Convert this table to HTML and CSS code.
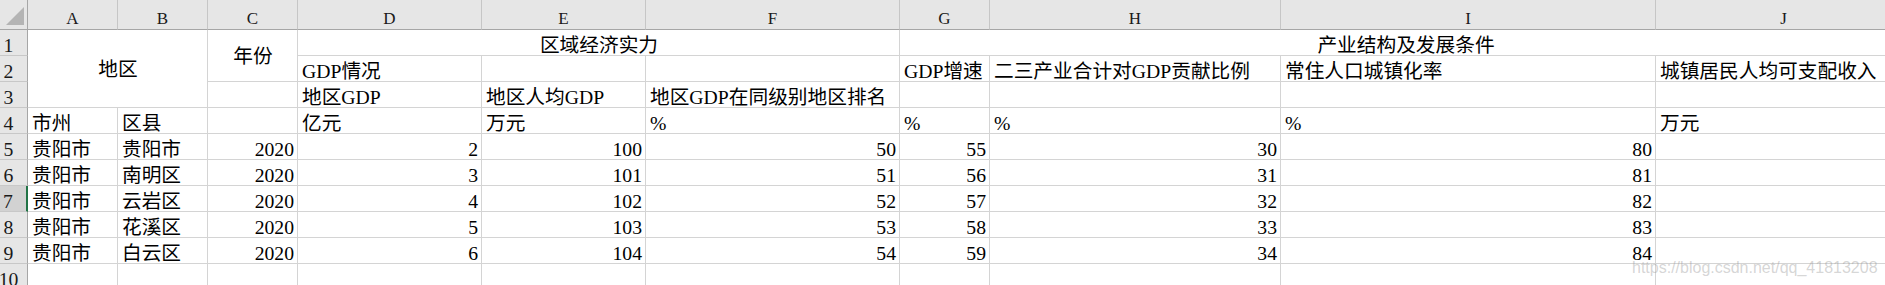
FILE: index.html
```html
<!DOCTYPE html>
<html lang="zh-CN">
<head>
<meta charset="utf-8">
<title>Sheet</title>
<link rel="stylesheet" href="styles.css">
</head>
<body>
<div class="sheet">
  <div class="hd corner"><div class="tri"></div></div>
  <div class="hd col">A</div><div class="hd col">B</div><div class="hd col">C</div><div class="hd col">D</div><div class="hd col">E</div><div class="hd col">F</div><div class="hd col">G</div><div class="hd col">H</div><div class="hd col">I</div><div class="hd col">J</div>

  <div class="rh">1</div>
  <div class="c ctr m-area">地区</div>
  <div class="c ctr m-year">年份</div>
  <div class="c ctrh m-eco">区域经济实力</div>
  <div class="c ctrh m-ind">产业结构及发展条件</div>

  <div class="rh">2</div>
  <div class="c">GDP情况</div><div class="c"></div><div class="c"></div><div class="c">GDP增速</div><div class="c">二三产业合计对GDP贡献比例</div><div class="c">常住人口城镇化率</div><div class="c">城镇居民人均可支配收入</div>

  <div class="rh">3</div>
  <div class="c"></div><div class="c">地区GDP</div><div class="c">地区人均GDP</div><div class="c">地区GDP在同级别地区排名</div><div class="c"></div><div class="c"></div><div class="c"></div><div class="c"></div>

  <div class="rh">4</div>
  <div class="c">市州</div><div class="c">区县</div><div class="c"></div><div class="c">亿元</div><div class="c">万元</div><div class="c">%</div><div class="c">%</div><div class="c">%</div><div class="c">%</div><div class="c">万元</div>

  <div class="rh">5</div>
  <div class="c">贵阳市</div><div class="c">贵阳市</div><div class="c r">2020</div><div class="c r">2</div><div class="c r">100</div><div class="c r">50</div><div class="c r">55</div><div class="c r">30</div><div class="c r">80</div><div class="c"></div>

  <div class="rh">6</div>
  <div class="c">贵阳市</div><div class="c">南明区</div><div class="c r">2020</div><div class="c r">3</div><div class="c r">101</div><div class="c r">51</div><div class="c r">56</div><div class="c r">31</div><div class="c r">81</div><div class="c"></div>

  <div class="rh sel">7</div>
  <div class="c">贵阳市</div><div class="c">云岩区</div><div class="c r">2020</div><div class="c r">4</div><div class="c r">102</div><div class="c r">52</div><div class="c r">57</div><div class="c r">32</div><div class="c r">82</div><div class="c"></div>

  <div class="rh">8</div>
  <div class="c">贵阳市</div><div class="c">花溪区</div><div class="c r">2020</div><div class="c r">5</div><div class="c r">103</div><div class="c r">53</div><div class="c r">58</div><div class="c r">33</div><div class="c r">83</div><div class="c"></div>

  <div class="rh">9</div>
  <div class="c">贵阳市</div><div class="c">白云区</div><div class="c r">2020</div><div class="c r">6</div><div class="c r">104</div><div class="c r">54</div><div class="c r">59</div><div class="c r">34</div><div class="c r">84</div><div class="c"></div>

  <div class="rh">10</div>
  <div class="c"></div><div class="c"></div><div class="c"></div><div class="c"></div><div class="c"></div><div class="c"></div><div class="c"></div><div class="c"></div><div class="c"></div><div class="c"></div>

  <div class="watermark">https://blog.csdn.net/qq_41813208</div>
</div>
</body>
</html>
```

FILE: styles.css
```css
html, body {
  margin: 0;
  padding: 0;
  background: #ffffff;
  overflow: hidden;
}

.sheet {
  position: relative;
  width: 1912px;
  display: grid;
  grid-template-columns: 28px 90px 90px 90px 184px 164px 254px 90px 291px 375px 256px;
  grid-template-rows: 30px repeat(10, 26px);
  font-family: "Liberation Serif", "Noto Sans CJK SC", serif;
  color: #000000;
}

.sheet > div {
  box-sizing: border-box;
  min-width: 0;
}

.hd {
  background: #e6e6e6;
  border-bottom: 1px solid #a6a6a6;
  border-right: 1px solid #c6c6c6;
  display: flex;
  justify-content: center;
  align-items: flex-end;
  font-size: 17px;
  line-height: 20px;
  color: #1a1a1a;
}

.corner {
  border-right: 1px solid #a6a6a6;
  justify-content: flex-end;
}

.tri {
  width: 18px;
  height: 18px;
  margin: 0 3px 4px 0;
  background: #b4b4b4;
  clip-path: polygon(100% 0, 100% 100%, 0 100%);
}

.rh {
  background: #e6e6e6;
  border-right: 1px solid #a6a6a6;
  border-bottom: 1px solid #c8c8c8;
  display: flex;
  justify-content: center;
  align-items: flex-end;
  padding-right: 10px;
  font-size: 19.7px;
  line-height: 20px;
  color: #1a1a1a;
  white-space: nowrap;
}

.rh.sel {
  background: #d2d2d2;
  border-right: 2px solid #217346;
}

.c {
  border-right: 1px solid #d4d4d4;
  border-bottom: 1px solid #d4d4d4;
  display: flex;
  align-items: flex-end;
  justify-content: flex-start;
  padding: 0 3px 0 4px;
  font-size: 19.7px;
  line-height: 20px;
  white-space: nowrap;
}

.c.r {
  justify-content: flex-end;
}

.c.ctr {
  justify-content: center;
  align-items: center;
}

.c.ctrh {
  justify-content: center;
}

.m-area {
  grid-column: 2 / span 2;
  grid-row: 2 / span 3;
}

.m-year {
  grid-column: 4 / span 1;
  grid-row: 2 / span 2;
}

.m-eco {
  grid-column: 5 / span 3;
  grid-row: 2 / span 1;
}

.m-ind {
  grid-column: 8 / span 4;
  grid-row: 2 / span 1;
}

.watermark {
  position: absolute;
  left: 1632px;
  top: 260px;
  font-family: "Liberation Sans", Arial, sans-serif;
  font-size: 16px;
  line-height: 15px;
  color: rgba(150, 150, 150, 0.4);
  white-space: nowrap;
  pointer-events: none;
}
```
